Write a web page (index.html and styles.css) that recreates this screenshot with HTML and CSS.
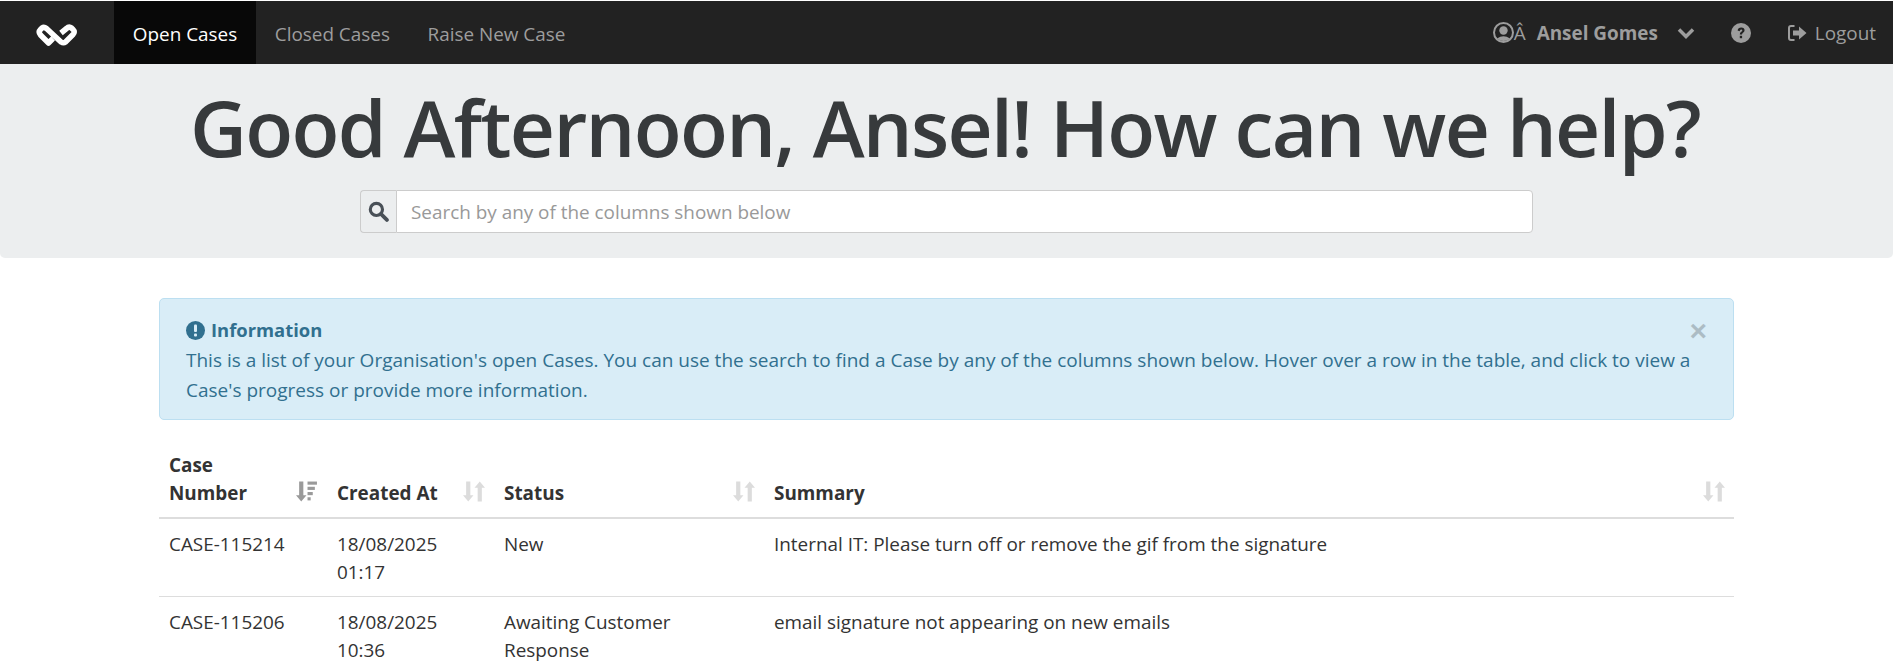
FILE: index.html
```html
<!DOCTYPE html>
<html lang="en">
<head>
    <meta charset="UTF-8">
    <meta name="viewport" content="width=device-width, initial-scale=1.0">
    <title>Open Cases</title>
    <link rel="stylesheet" href="styles.css">
</head>
<body>
    <nav class="navbar">
        <a class="brand" href="#">
            <svg width="42" height="26" viewBox="0 0 42 26" fill="none" stroke="#fff" stroke-width="5.5" stroke-linejoin="round">
                <path d="M17 16.5 L12.5 21 L4.5 13 Q2 10 4.5 7.5 L6 6 Q8 4.5 10.5 6.5 L25 20 Q27.5 21.5 29.5 20 L37 12.5 Q39.5 10 37 7.5 L35.5 6 Q33 4 30.5 6.5 L25 11"/>
            </svg>
        </a>
        <ul class="nav-links">
            <li class="active"><a href="#">Open Cases</a></li>
            <li><a href="#">Closed Cases</a></li>
            <li><a href="#">Raise New Case</a></li>
        </ul>
        <div class="nav-right">
            <a class="user" href="#">
                <svg class="icon-user" width="21" height="21" viewBox="0 0 21 21" fill="#9d9d9d">
                    <circle cx="10.5" cy="10.5" r="9.5" fill="none" stroke="#9d9d9d" stroke-width="2"/>
                    <circle cx="10.5" cy="8.5" r="4.2"/>
                    <path d="M4 16.5 Q10.5 12 17 16.5 Q10.5 21.5 4 16.5Z"/>
                </svg><span class="stray">Â</span>
                <strong>Ansel Gomes</strong>
                <svg class="chevron" width="18" height="12" viewBox="0 0 18 12" fill="none" stroke="#9d9d9d" stroke-width="3.5"><path d="M2 2.5 L9 9.5 L16 2.5"/></svg>
            </a>
            <a class="help" href="#">
                <svg width="20" height="20" viewBox="0 0 20 20">
                    <circle cx="10" cy="10" r="10" fill="#9d9d9d"/>
                    <path d="M6.6 7.6 Q7 4.4 10.2 4.4 Q13.6 4.6 13.6 7.3 Q13.6 8.9 11.8 9.9 Q11 10.4 11 11.6 L8.8 11.6 Q8.6 9.6 10.2 8.7 Q11.3 8.1 11.3 7.4 Q11.2 6.5 10.1 6.5 Q9.1 6.5 8.6 8.3Z" fill="#222"/>
                    <rect x="8.8" y="12.8" width="2.3" height="2.4" fill="#222"/>
                </svg>
            </a>
            <a class="logout" href="#">
                <svg width="19" height="16" viewBox="0 0 19 16">
                    <path d="M6.5 1 H3 Q1 1 1 3 V13 Q1 15 3 15 H6.5" fill="none" stroke="#9d9d9d" stroke-width="2"/>
                    <path d="M5 5.5 H11 V1.5 L18.5 8 L11 14.5 V10.5 H5Z" fill="#9d9d9d"/>
                </svg>
                Logout
            </a>
        </div>
    </nav>

    <header class="jumbotron">
        <h1>Good Afternoon, Ansel! How can we help?</h1>
        <div class="search">
            <span class="search-addon">
                <svg width="21" height="21" viewBox="0 0 20 20" fill="none" stroke="#495057">
                    <circle cx="8" cy="8" r="5.8" stroke-width="3"/>
                    <path d="M12.5 12.5 L18 18" stroke-width="3.6" stroke-linecap="round"/>
                </svg>
            </span>
            <input type="text" placeholder="Search by any of the columns shown below">
        </div>
    </header>

    <main class="container">
        <div class="alert">
            <button class="close" type="button">&times;</button>
            <div class="alert-title">
                <svg width="19" height="19" viewBox="0 0 19 19">
                    <circle cx="9.5" cy="9.5" r="9.5" fill="#31708f"/>
                    <rect x="8" y="3.5" width="3" height="7.5" rx="1" fill="#d9edf7"/>
                    <rect x="8" y="12.5" width="3" height="3" rx="1" fill="#d9edf7"/>
                </svg>
                <strong>Information</strong>
            </div>
            <p>This is a list of your Organisation's open Cases. You can use the search to find a Case by any of the columns shown below. Hover over a row in the table, and click to view a Case's progress or provide more information.</p>
        </div>

        <table class="cases">
            <colgroup>
                <col class="col-number">
                <col class="col-created">
                <col class="col-status">
                <col>
            </colgroup>
            <thead>
                <tr>
                    <th>Case Number
                        <svg class="sort" width="22" height="23" viewBox="0 0 21 21" fill="#9a9a9a">
                            <path d="M3 1 H7 V14 H10 L5 20 L0 14 H3Z"/>
                            <rect x="11" y="1" width="9" height="3"/>
                            <rect x="11" y="6" width="7" height="3"/>
                            <rect x="11" y="11" width="5" height="3"/>
                            <rect x="11" y="16" width="3" height="3"/>
                        </svg>
                    </th>
                    <th>Created At
                        <svg class="sort" width="22" height="23" viewBox="0 0 21 21" fill="#dcdcdc"><path d="M3 1 H7 V14 H10 L5 20 L0 14 H3Z"/><path d="M14 20 H18 V7 H21 L16 1 L11 7 H14Z"/></svg>
                    </th>
                    <th>Status
                        <svg class="sort" width="22" height="23" viewBox="0 0 21 21" fill="#dcdcdc"><path d="M3 1 H7 V14 H10 L5 20 L0 14 H3Z"/><path d="M14 20 H18 V7 H21 L16 1 L11 7 H14Z"/></svg>
                    </th>
                    <th>Summary
                        <svg class="sort" width="22" height="23" viewBox="0 0 21 21" fill="#dcdcdc"><path d="M3 1 H7 V14 H10 L5 20 L0 14 H3Z"/><path d="M14 20 H18 V7 H21 L16 1 L11 7 H14Z"/></svg>
                    </th>
                </tr>
            </thead>
            <tbody>
                <tr>
                    <td>CASE-115214</td>
                    <td>18/08/2025 01:17</td>
                    <td class="status">New</td>
                    <td>Internal IT: Please turn off or remove the gif from the signature</td>
                </tr>
                <tr>
                    <td>CASE-115206</td>
                    <td>18/08/2025 10:36</td>
                    <td class="status">Awaiting Customer Response</td>
                    <td>email signature not appearing on new emails</td>
                </tr>
            </tbody>
        </table>
    </main>
</body>
</html>
```

FILE: styles.css
```css
* {
    box-sizing: border-box;
}

html {
    overflow: hidden;
}

body {
    margin: 0;
    padding-top: 1px;
    font-family: "Open Sans", "Noto Sans", sans-serif;
    font-size: 18.9px;
    line-height: 30px;
    color: #333;
    background-color: #fff;
}

a {
    text-decoration: none;
    color: inherit;
}

.navbar {
    display: flex;
    align-items: stretch;
    height: 63px;
    background-color: #222;
    color: #9d9d9d;
}

.brand {
    display: flex;
    align-items: center;
    justify-content: center;
    width: 114px;
    padding-top: 5px;
}

.nav-links {
    display: flex;
    margin: 0;
    padding: 0;
    list-style: none;
}

.nav-links a {
    display: block;
    padding: 18px 18.8px 15px;
}

.nav-links .active {
    background-color: #080808;
    color: #fff;
}

.nav-right {
    display: flex;
    align-items: center;
    margin-left: auto;
    padding-right: 17px;
}

.user {
    display: flex;
    align-items: center;
}

.stray {
    margin-right: 11px;
}

.user strong {
    margin-right: 19px;
}

.help {
    display: flex;
    margin-left: 36px;
}

.logout {
    display: flex;
    align-items: center;
    gap: 8px;
    margin-left: 37px;
}

.jumbotron {
    height: 194px;
    padding-top: 9px;
    background-color: #eceeef;
    border-radius: 0 0 5px 5px;
}

.jumbotron h1 {
    margin: 0;
    padding-right: 3px;
    font-size: 78.5px;
    font-weight: 600;
    line-height: 108px;
    letter-spacing: -1.7px;
    text-align: center;
    color: #373a3c;
}

.search {
    display: flex;
    width: 1173px;
    height: 43px;
    margin: 9px auto 0 360px;
}

.search-addon {
    display: flex;
    align-items: center;
    justify-content: center;
    width: 36px;
    background-color: #eceeef;
    border: 1px solid #ccc;
    border-right: 0;
    border-radius: 4px 0 0 4px;
}

.search input {
    flex: 1;
    padding: 0 14px;
    font: inherit;
    color: #333;
    background-color: #fff;
    border: 1px solid #ccc;
    border-radius: 0 4px 4px 0;
}

.search input::placeholder {
    color: #999;
}

.container {
    width: 1575px;
    margin: 40px 0 0 159px;
}

.alert {
    position: relative;
    height: 122px;
    padding: 16px 26px;
    font-size: 19px;
    color: #31708f;
    background-color: #d9edf7;
    border: 1px solid #bcdff1;
    border-radius: 5px;
}

.alert-title {
    display: flex;
    align-items: center;
    gap: 6px;
    font-size: 18.4px;
}

.alert p {
    margin: 0;
}

.close {
    position: absolute;
    top: 17px;
    right: 26px;
    padding: 0;
    font: 700 30px/30px "Liberation Sans", sans-serif;
    color: #000;
    opacity: 0.2;
    background: none;
    border: 0;
}

.cases {
    width: 100%;
    margin-top: 21px;
    line-height: 28px;
    table-layout: fixed;
    border-collapse: collapse;
}

.col-number {
    width: 168px;
}

.col-created {
    width: 167px;
}

.col-status {
    width: 270px;
}

.cases th {
    position: relative;
    padding: 10px 35px 10px 10px;
    font-weight: 700;
    text-align: left;
    vertical-align: bottom;
    border-bottom: 2px solid #ddd;
}

.cases td {
    padding: 11px 10px 10px;
    vertical-align: top;
    border-bottom: 1px solid #ddd;
}

.cases .status {
    padding-right: 30px;
}

.sort {
    position: absolute;
    right: 9px;
    bottom: 14px;
}
```
